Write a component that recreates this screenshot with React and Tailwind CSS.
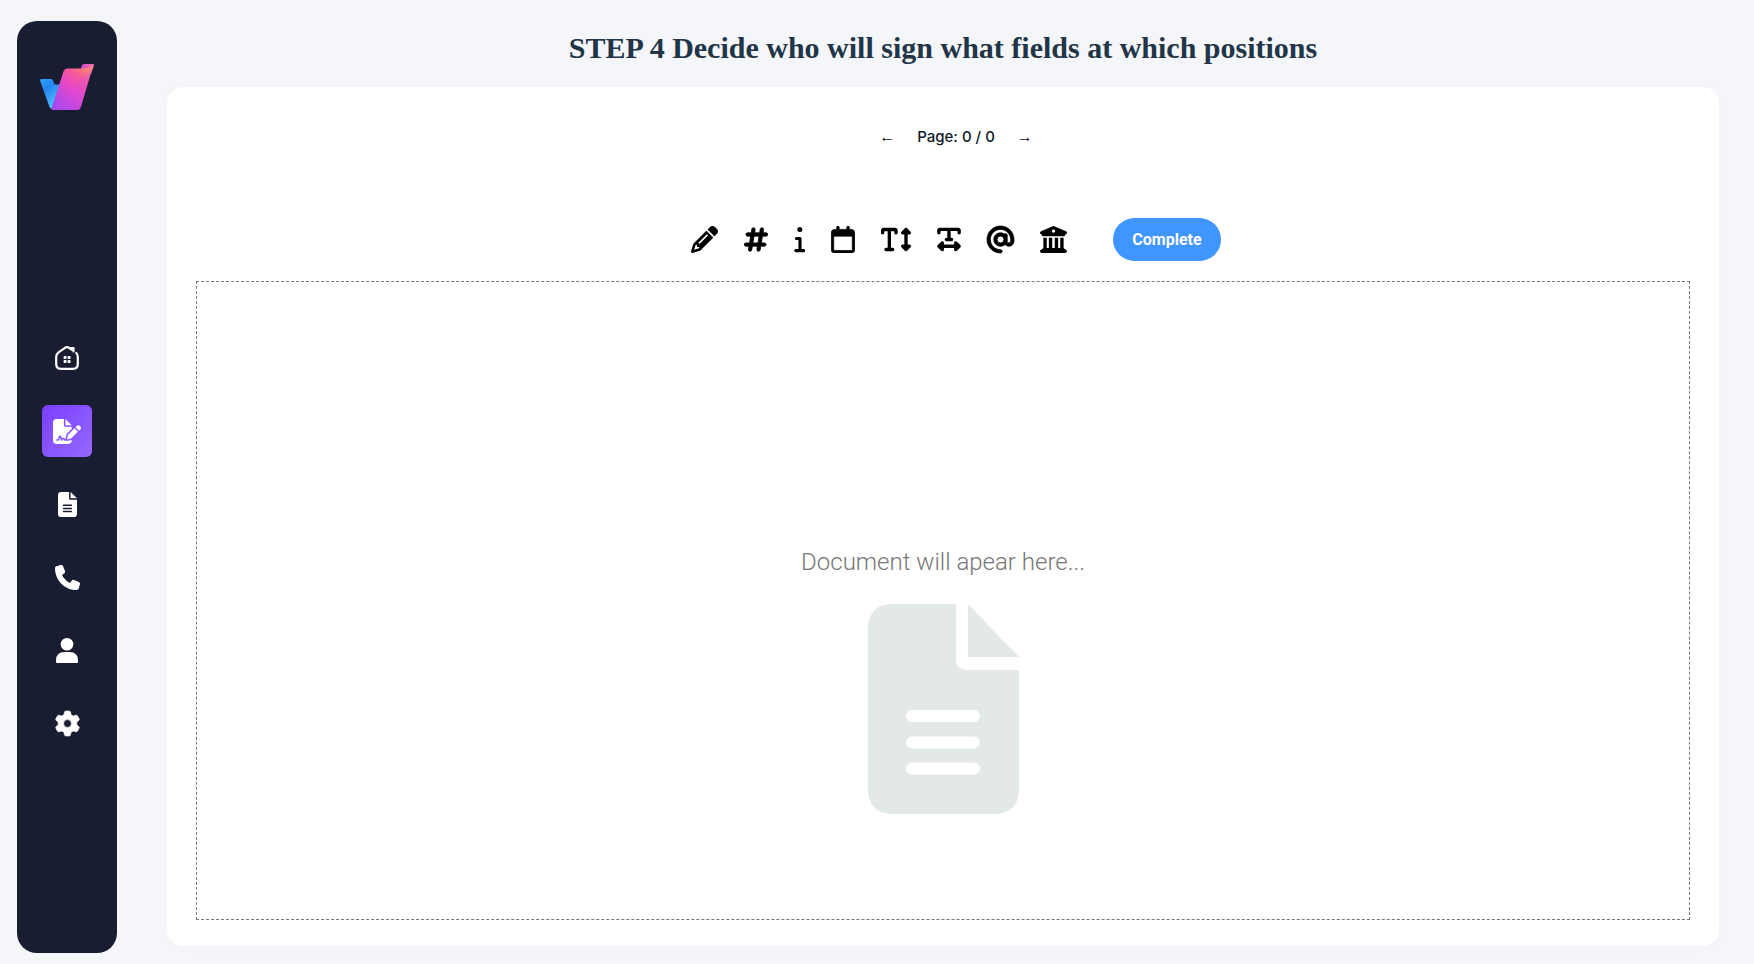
import { useState } from "react";
import {
  FaPencil,
  FaHashtag,
  FaRegCalendar,
  FaTextHeight,
  FaTextWidth,
  FaAt,
  FaBuildingColumns,
  FaFileSignature,
  FaPhone,
  FaGear,
} from "react-icons/fa6";

function Logo() {
  return (
    <svg viewBox="0 0 54 46" className="h-[46px] w-[54px]" aria-hidden="true">
      <defs>
        <linearGradient id="blue" x1="0" y1="0" x2="0.6" y2="1">
          <stop offset="0" stopColor="#2fa6f7" />
          <stop offset="0.35" stopColor="#2384f3" />
          <stop offset="1" stopColor="#58c4fb" />
        </linearGradient>
        <linearGradient id="pink" x1="0.95" y1="0" x2="0.25" y2="1">
          <stop offset="0" stopColor="#ff9a5c" />
          <stop offset="0.3" stopColor="#f6589c" />
          <stop offset="0.55" stopColor="#ea48c4" />
          <stop offset="1" stopColor="#a048f0" />
        </linearGradient>
        <linearGradient id="tab" x1="0" y1="0" x2="1" y2="0">
          <stop offset="0" stopColor="#d544d8" />
          <stop offset="1" stopColor="#f777a6" />
        </linearGradient>
      </defs>
      <path d="M1.500 15H11q1.500 0 2 1.500L14.500 20.500H22L14 44Q11 46 9.500 43L.2 17Q-.2 15 1.500 15Z" fill="url(#blue)" />
      <path d="M44 0H52.500Q54.300 0 53.800 2L51 10H40L41.500 2.500Q42 0 44 0Z" fill="url(#tab)" />
      <path d="M27.500 4.500H44Q50 4.500 53 2L41 42.500Q40 46 37 46H12.500Q11 46 12 43L23.500 7.500Q24.500 4.500 27.500 4.500Z" fill="url(#pink)" />
      <path d="M53 2L41 42.500Q40 46 37 46H12.500Z" fill="#d04ce8" opacity="0.300" />
    </svg>
  );
}

function HomeIcon() {
  return (
    <svg viewBox="0 0 24 24" className="size-6" fill="none" stroke="currentColor" strokeWidth="2.200" strokeLinecap="round" strokeLinejoin="round" aria-hidden="true">
      <path d="M17 3.800L14 1.800Q12 .6 10 1.800L3.500 6.300Q1.200 8 1.200 11V18Q1.200 22.800 6 22.800H18Q22.800 22.800 22.800 18V11Q22.800 8.500 21.300 7" />
      <path d="M15.500 2H18.500V5.500" />
      <g fill="currentColor" stroke="none">
        <rect x="8.600" y="10" width="3" height="3" rx=".8" />
        <rect x="12.600" y="10" width="3" height="3" rx=".8" />
        <rect x="8.600" y="14" width="3" height="3" rx=".8" />
        <rect x="12.600" y="14" width="3" height="3" rx=".8" />
      </g>
    </svg>
  );
}

function FileIcon({ className }) {
  return (
    <svg viewBox="0 0 151 210" preserveAspectRatio="none" className={className} fill="currentColor" aria-hidden="true">
      <path
        fillRule="evenodd"
        d="M25 0H88V55Q88 66 99 66H151V184Q151 210 126 210H25Q0 210 0 184V26Q0 0 25 0ZM44 106a6 6 0 0 0 0 12h62a6 6 0 0 0 0-12ZM44 132.500a6 6 0 0 0 0 12h62a6 6 0 0 0 0-12ZM44 158.500a6 6 0 0 0 0 12h62a6 6 0 0 0 0-12Z"
      />
      <path d="M100 0V53H151Z" />
    </svg>
  );
}

function UserIcon() {
  return (
    <svg viewBox="0 0 22 25" className="h-[25px] w-[22px]" fill="currentColor" aria-hidden="true">
      <circle cx="11" cy="6.300" r="6.300" />
      <path d="M0 24V22.500Q0 14 8.500 14H13.500Q22 14 22 22.500V24Q22 25 21 25H1Q0 25 0 24Z" />
    </svg>
  );
}

function InfoIcon({ className }) {
  return (
    <svg viewBox="0 0 11 27" className={className} fill="none" stroke="currentColor" strokeWidth="3.100" strokeLinecap="round" strokeLinejoin="round" aria-hidden="true">
      <circle cx="5.800" cy="3.400" r="2.500" fill="currentColor" stroke="none" />
      <path d="M2.400 12.500H6V24.600M1.800 24.600H9.800" />
    </svg>
  );
}

const links = [
  { label: "Home", icon: <HomeIcon /> },
  { label: "Sign", icon: <FaFileSignature className="h-[25px] w-[28px]" />, active: true },
  { label: "Documents", icon: <FileIcon className="h-[25px] w-[19px]" /> },
  { label: "Phone", icon: <FaPhone className="size-[25px]" /> },
  { label: "Account", icon: <UserIcon /> },
  { label: "Settings", icon: <FaGear className="size-[25px] overflow-visible [stroke-width:14]" /> },
];

const tools = [
  { label: "Signature", icon: <FaPencil className="size-[27px]" /> },
  { label: "Number", icon: <FaHashtag className="h-[27px] w-6 [stroke-width:14]" /> },
  { label: "Info", icon: <InfoIcon className="h-[27px] w-[11px]" /> },
  { label: "Date", icon: <FaRegCalendar className="h-[27px] w-6 [stroke-width:14]" /> },
  { label: "Text height", icon: <FaTextHeight className="h-[27px] w-[30px]" /> },
  { label: "Text width", icon: <FaTextWidth className="h-[27px] w-6" /> },
  { label: "Email", icon: <FaAt className="size-[27px] overflow-visible [stroke-width:14]" /> },
  { label: "Institution", icon: <FaBuildingColumns className="size-[27px]" /> },
];

export default function App() {
  const [tool, setTool] = useState(null);
  return (
    <div className="flex min-h-screen bg-[#f4f6fa] pl-[17px] pr-[35px] font-['Roboto',sans-serif]">
      <aside className="mb-[11px] mt-[21px] flex w-[100px] shrink-0 flex-col items-center rounded-[20px] bg-[#191d32] pt-[43px]">
        <a href="#home" aria-label="Dashboard">
          <Logo />
        </a>
        <nav className="mt-[222px] flex flex-col gap-[21px]">
          {links.map(({ label, icon, active }) => (
            <a
              key={label}
              href={"#" + label.toLowerCase()}
              aria-label={label}
              aria-current={active ? "page" : undefined}
              className={
                "flex h-[52px] w-[50px] items-center justify-center rounded-md text-white " +
                (active ? "bg-linear-to-br from-[#7a3dff] to-[#9867ff]" : "")
              }
            >
              {icon}
            </a>
          ))}
        </nav>
      </aside>

      <main className="ml-[50px] flex min-w-0 flex-1 flex-col pb-[18px]">
        <h1 className="flex h-[87px] items-center justify-center pb-px pt-2 text-center font-['Liberation_Serif',serif] text-[30px] font-bold text-[#213547]">
          STEP 4 Decide who will sign what fields at which positions
        </h1>

        <section className="flex flex-1 flex-col rounded-2xl bg-white px-[29px] pb-[26px] pt-[29px] shadow-[0_0_20px_rgba(0,0,0,0.015)]">
          <div className="flex h-[42px] items-center justify-center gap-[22px] pl-[26px] text-[15px] text-[#111827]">
            <button type="button" aria-label="Previous page" className="font-['Liberation_Serif',serif] text-base">←</button>
            <span className="font-['Inter',sans-serif] font-medium">Page: 0 / 0</span>
            <button type="button" aria-label="Next page" className="font-['Liberation_Serif',serif] text-base">→</button>
          </div>

          <div className="mt-[60px] flex items-center justify-center gap-[26px] pl-[26px] text-black">
            {tools.map(({ label, icon }) => (
              <button key={label} type="button" aria-label={label} aria-pressed={tool === label} onClick={() => setTool(label)}>
                {icon}
              </button>
            ))}
            <button type="button" className="ml-5 h-[43px] rounded-full bg-[#4096ff] px-[19px] text-base font-bold text-white">
              Complete
            </button>
          </div>

          <div className="mt-5 flex flex-1 flex-col items-center justify-center gap-6 border border-dashed border-[#777] pt-[156px]">
            <p className="text-2xl font-light leading-9 text-[#777]">Document will apear here...</p>
            <FileIcon className="h-[210px] w-[151px] text-[#e3e9e9]" />
          </div>
        </section>
      </main>
    </div>
  );
}
